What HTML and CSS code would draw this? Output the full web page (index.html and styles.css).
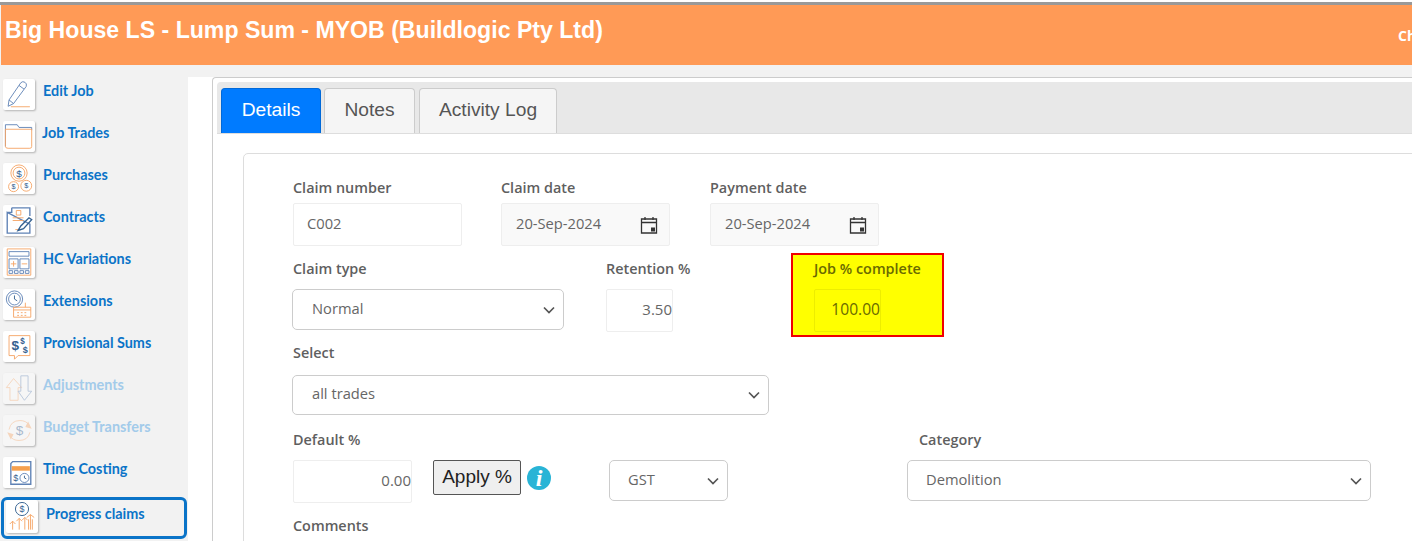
FILE: index.html

```html
<!DOCTYPE html>
<html lang="en">

<head>
  <meta charset="UTF-8">
  <title>Progress claims</title>
  <link rel="stylesheet" href="styles.css">
</head>

<body>

  <div class="top-line"></div>
  <header class="header">
    <h1 class="job-title">Big House LS - Lump Sum - MYOB (Buildlogic Pty Ltd)</h1>
    <span class="header-link">Change job</span>
  </header>

  <div class="layout">
    <nav class="sidebar">
      <a class="nav-item">
        <span class="nav-icon">
          <svg viewBox="0 0 32 32"><path class="b" d="M5 22 L18 3 Q20 1 22.500 2.500 Q25 4 24 7 L10 26 L4 29 Z M16 6 L21.500 10 M5 22 L10 26"/><path class="o" d="M7 29.500 H28"/></svg>
        </span>
        Edit Job
      </a>
      <a class="nav-item">
        <span class="nav-icon">
          <svg viewBox="0 0 32 32"><path class="b" d="M1 27 V3 H14 L16 6 H30 V9"/><path class="o" d="M1 8 H30 V27 Q30 29 28 29 H4 Q1 29 1 27 Z"/></svg>
        </span>
        <span class="nudge">Job Trades</span>
      </a>
      <a class="nav-item">
        <span class="nav-icon">
          <svg viewBox="0 0 32 32"><circle class="o" cx="16" cy="10" r="9"/><circle class="o" cx="16" cy="10" r="6.500"/><circle class="o" cx="10" cy="25" r="5.500"/><circle class="o" cx="24" cy="24" r="6"/><text class="d" x="16" y="14" font-size="11">$</text><text class="d" x="10" y="28" font-size="8">$</text><text class="d" x="24" y="27" font-size="8">$</text></svg>
        </span>
        Purchases
      </a>
      <a class="nav-item">
        <span class="nav-icon">
          <svg viewBox="0 0 32 32"><path class="b thick" d="M8 2 H28 V11 M28 20 V30 H3 V7 Z M8 2 V7 H3"/><path class="o" d="M13 5 H18 V10 H13 Z M9 13 H21 M9 16 H21 M12 26 H18"/><path class="n thick" d="M15 27 L18 22 L27 13 L30 15 L21 25 Z"/></svg>
        </span>
        Contracts
      </a>
      <a class="nav-item">
        <span class="nav-icon">
          <svg viewBox="0 0 32 32"><path class="o" d="M3 1 H29 V30 H3 Z"/><path class="b" d="M5 4 H27 V9 H5 Z M5 12 H15 V23 H5 Z M17 12 H27 V23 H17 Z M5 25 H9 V28 H5 Z M11 25 H15 V28 H11 Z M17 25 H21 V28 H17 Z M23 25 H27 V28 H23 Z"/><path class="o" d="M7 17.500 H13 M10 14.500 V20.500 M19 17.500 H25"/></svg>
        </span>
        HC Variations
      </a>
      <a class="nav-item">
        <span class="nav-icon">
          <svg viewBox="0 0 32 32"><circle class="b" cx="11" cy="10" r="9"/><circle class="b" cx="11" cy="10" r="6.500"/><path class="n" d="M11 6 V10 L14 12"/><path class="o" d="M10 19 H29 V30 H10 Z M10 22 H29 M23 14 V19 M14 25 H16 M18 25 H20 M22 25 H24 M14 28 H16 M18 28 H20 M22 28 H24"/></svg>
        </span>
        Extensions
      </a>
      <a class="nav-item">
        <span class="nav-icon">
          <svg viewBox="0 0 32 32"><path class="o" d="M5 4 H28 V26 H15 L11 30 V26 H5 Z"/><text class="d heavy" x="12" y="20" font-size="15">$</text><text class="d heavy" x="20" y="13" font-size="9">$</text><text class="d heavy" x="23" y="23" font-size="10">$</text></svg>
        </span>
        Provisional Sums
      </a>
      <a class="nav-item is-disabled">
        <span class="nav-icon">
          <svg viewBox="0 0 32 32"><path class="o" d="M10 5 L19 15 H15 V29 H6 V15 H2 Z"/><path class="b" d="M18 2 H26 V19 H30 L22 29 L15 19 H18 Z"/></svg>
        </span>
        Adjustments
      </a>
      <a class="nav-item is-disabled">
        <span class="nav-icon">
          <svg viewBox="0 0 32 32"><path class="o" d="M5 15 Q7 5 17 5 Q24 5 27 10 M28 18 Q26 27 16 27 Q9 27 6 22"/><path class="fill-o" d="M26 6 L30 14 L23 12 Z M7 26 L3 18 L10 20 Z"/><text class="d" x="16.500" y="21" font-size="15">$</text></svg>
        </span>
        Budget Transfers
      </a>
      <a class="nav-item">
        <span class="nav-icon">
          <svg viewBox="0 0 32 32"><path class="b thick" d="M9 4 H29 V29 H7 V6 Z"/><path class="bar" d="M8 9 H28 V14 H8 Z"/><circle class="b" cx="22" cy="22" r="5"/><text class="d" x="12.500" y="25.500" font-size="10">$</text><path class="n" d="M22 19.500 V22 L24 23"/></svg>
        </span>
        Time Costing
      </a>
      <a class="nav-item is-active">
        <span class="nav-icon">
          <svg viewBox="0 0 32 32"><circle class="n" cx="16" cy="8" r="7"/><text class="d" x="16" y="11.500" font-size="9.500">$</text><path class="o" d="M3 24 L6 21 L9 24 M6 21 V30 M10 21 L13 18 L16 21 M13 18 V30 M16 20 L19 17 L22 20 M19 17 V30 M21 17 L25 14 L29 17 M25 14 V30 M23 19 V30 M27 19 V30"/></svg>
        </span>
        Progress claims
      </a>
    </nav>

    <main class="main">
      <div class="panel">
        <div class="tab-bar">
          <button type="button" class="tab tab-details is-current">Details</button>
          <button type="button" class="tab tab-notes">Notes</button>
          <button type="button" class="tab tab-log">Activity Log</button>
        </div>

        <form class="claim-card">
          <div class="row row-first">
            <div class="field w-169">
              <label>Claim number</label>
              <input type="text" class="text-input" value="C002">
            </div>
            <div class="field w-169">
              <label>Claim date</label>
              <div class="date-input">
                20-Sep-2024
                <svg class="cal-icon" viewBox="0 0 18 18"><path d="M1.500 3 H16.500 V17 H1.500 Z M1.500 6.500 H16.500 M5 1 V4 M13 1 V4" fill="none" stroke="#333" stroke-width="1.300"/><rect x="11" y="11.500" width="4" height="4" fill="#333"/></svg>
              </div>
            </div>
            <div class="field w-169 payment">
              <label>Payment date</label>
              <div class="date-input">
                20-Sep-2024
                <svg class="cal-icon" viewBox="0 0 18 18"><path d="M1.500 3 H16.500 V17 H1.500 Z M1.500 6.500 H16.500 M5 1 V4 M13 1 V4" fill="none" stroke="#333" stroke-width="1.300"/><rect x="11" y="11.500" width="4" height="4" fill="#333"/></svg>
              </div>
            </div>
          </div>

          <div class="row row-second">
            <div class="field claim-type">
              <label>Claim type</label>
              <select class="select-input"><option>Normal</option></select>
            </div>
            <div class="field retention">
              <label>Retention %</label>
              <input type="text" class="text-input num" value="3.50">
            </div>
            <div class="field job-complete">
              <label>Job % complete</label>
              <input type="text" class="text-input num" value="100.00">
            </div>
          </div>

          <div class="row row-third">
            <div class="field select-all">
              <label>Select</label>
              <select class="select-input"><option>all trades</option></select>
            </div>
          </div>

          <div class="row row-fourth">
            <div class="field default-pct">
              <label>Default %</label>
              <input type="text" class="text-input num" value="0.00">
            </div>
            <button type="button" class="apply-btn">Apply %</button>
            <span class="info-icon">i</span>
            <select class="select-input gst"><option>GST</option></select>
            <div class="field category">
              <label>Category</label>
              <select class="select-input"><option>Demolition</option></select>
            </div>
          </div>

          <div class="comments">
            <label>Comments</label>
          </div>
        </form>
      </div>
    </main>
  </div>

</body>

</html>
```

FILE: styles.css

```css
* {
  box-sizing: border-box;
}

html,
body {
  height: 541px;
  overflow: hidden;
}

body {
  margin: 0;
  background: #f2f2f2;
  font-family: "Open Sans", sans-serif;
}

.top-line {
  height: 5px;
  background: #999;
  border-top: 2px solid #fff;
}

.header {
  display: flex;
  height: 60px;
  margin-left: 1px;
  background: #ff9a56;
  color: #fff;
  overflow: hidden;
}

.job-title {
  flex: none;
  width: 1397px;
  margin: 0;
  padding: 10px 0 0 4px;
  font-family: "Liberation Sans", sans-serif;
  font-size: 23.100px;
  line-height: 30px;
  font-weight: bold;
}

.header-link {
  flex: none;
  padding-top: 21px;
  font-size: 14px;
  font-weight: bold;
  white-space: nowrap;
}

.layout {
  display: flex;
}

/* sidebar */
.sidebar {
  flex: none;
  width: 188px;
  padding: 14px 0 0 3px;
}

.nav-item {
  display: flex;
  align-items: flex-start;
  height: 42px;
  font-family: Lato, sans-serif;
  font-size: 14.400px;
  line-height: 24px;
  font-weight: bold;
  color: #0b74c8;
}

.nav-icon {
  flex: none;
  width: 32px;
  height: 31px;
  margin-right: 8px;
  padding: 1px;
  background: #fff;
  border-radius: 2px;
  box-shadow: 1px 1px 2px rgba(0, 0, 0, 0.25);
}

.nav-icon svg {
  display: block;
  width: 100%;
  height: 100%;
  fill: none;
  stroke-width: 1;
}

.nav-icon .b { stroke: #5f82b5; }
.nav-icon .o { stroke: #f5a566; }
.nav-icon .n { stroke: #33608f; }
.nav-icon .thick { stroke-width: 1.500; }
.nav-icon .bar { fill: #f5a04f; }
.nav-icon .fill-o { fill: #f5a566; }

.nav-icon .d {
  fill: #33608f;
  font-family: "Liberation Sans", sans-serif;
  font-weight: normal;
  text-anchor: middle;
}

.nav-icon .heavy {
  font-weight: bold;
}

.nudge {
  margin-left: -1px;
}

.is-disabled {
  color: #a3cbea;
}

.is-disabled .nav-icon {
  background: #f6f6f6;
}

.is-disabled svg {
  opacity: 0.4;
}

.is-active {
  width: 186px;
  height: 42px;
  margin: -2px 0 0 -2px;
  padding-left: 2px;
  border: 3px solid #0b74c8;
  border-radius: 6px;
  line-height: 28px;
}

.is-active .nav-icon {
  height: 33px;
}

/* main area */
.main {
  flex: 1;
  min-width: 0;
  height: 464px;
  margin-top: 12px;
  padding-left: 24px;
  background: #fff;
}

.panel {
  height: 100%;
  padding: 4px 0 0 4px;
  border-top: 1px solid #ccc;
  border-left: 1px solid #ccc;
  border-top-left-radius: 4px;
}

.tab-bar {
  display: flex;
  height: 52px;
  padding: 6px 0 0 4px;
  background: #e8e8e8;
  border-bottom: 1px solid #ddd;
  border-top-left-radius: 4px;
}

.tab {
  height: 45px;
  padding: 0 0 2px;
  background: #f5f5f5;
  border: 1px solid #ccc;
  border-bottom: none;
  border-radius: 4px 4px 0 0;
  color: #555;
  font-family: "Liberation Sans", sans-serif;
  font-size: 19.200px;
}

.tab-details {
  width: 100px;
}

.tab-notes {
  width: 91px;
  margin-left: 3px;
}

.tab-log {
  width: 138px;
  margin-left: 4px;
}

.is-current {
  background: #007bff;
  border-color: #0069d9;
  color: #fff;
}

.claim-card {
  width: 1300px;
  height: 500px;
  margin: 19px 0 0 26px;
  padding: 25px 0 0 49px;
  border: 1px solid #ddd;
  border-radius: 5px;
}

.row {
  display: flex;
}

.row-first {
  gap: 39px;
}

.payment {
  margin-left: 1px;
}

.field label,
.comments label {
  display: block;
  height: 18px;
  margin-bottom: 6px;
  font-size: 14.400px;
  line-height: 18px;
  font-weight: 600;
  color: #5f5f5f;
  white-space: nowrap;
}

.w-169 {
  width: 169px;
}

.text-input,
.date-input,
.select-input {
  font-family: "Open Sans", sans-serif;
  font-size: 14.700px;
  color: #666;
}

.text-input {
  display: block;
  width: 100%;
  height: 43px;
  padding: 0 13px 4px;
  border: 1px solid #eee;
  border-radius: 2px;
  background: transparent;
  outline: none;
}

.text-input.num {
  padding: 0 0 4px 2px;
  font-size: 15px;
  text-align: right;
}

.date-input {
  display: flex;
  align-items: center;
  justify-content: space-between;
  height: 43px;
  padding: 0 11px 4px 14px;
  background: #f9f9f9;
  border: 1px solid #eee;
  border-radius: 2px;
}

.cal-icon {
  width: 18px;
  height: 18px;
  margin-top: 4px;
}

.select-input {
  display: block;
  width: 100%;
  height: 41px;
  padding: 0 30px 4px 19px;
  appearance: none;
  background: #fff url("data:image/svg+xml,%3Csvg xmlns='http://www.w3.org/2000/svg' width='12' height='8'%3E%3Cpath d='M1 1.500 L6 6.500 L11 1.500' fill='none' stroke='%23555' stroke-width='1.700'/%3E%3C/svg%3E") no-repeat right 8px center;
  border: 1px solid #ccc;
  border-radius: 5px;
}

.row-second {
  height: 84px;
  margin-top: 7px;
}

.row-second .field {
  padding-top: 7px;
}

.row-second label {
  margin-bottom: 11px;
}

.claim-type {
  width: 272px;
  margin-left: -1px;
}

.claim-type label,
.select-all label {
  padding-left: 1px;
}

.retention {
  width: 67px;
  margin-left: 42px;
}

.row-second .job-complete {
  width: 153px;
  margin-left: 118px;
  padding: 5px 0 0 21px;
  background: #ff0;
  border: 2px solid #f00000;
}

.job-complete label {
  color: #6a6a00;
}

.job-complete .text-input.num {
  width: 67px;
  border-color: #eded00;
  color: #6a6a00;
  font-size: 15.600px;
}

.row-third {
  margin-top: 7px;
}

.row-third label {
  margin-bottom: 13px;
}

.select-all {
  width: 477px;
  margin-left: -1px;
}

.select-all .select-input {
  height: 40px;
}

.row-fourth {
  align-items: flex-start;
  margin-top: 16px;
}

.row-fourth label {
  margin-bottom: 11px;
}

.default-pct {
  width: 119px;
}

.apply-btn {
  flex: none;
  width: 88px;
  height: 35px;
  margin: 29px 0 0 21px;
  padding: 0 0 2px;
  background: #efefef;
  border: 1px solid #555;
  border-radius: 2px;
  color: #222;
  font-family: "Liberation Sans", sans-serif;
  font-size: 19px;
}

.info-icon {
  flex: none;
  width: 24px;
  height: 24px;
  margin: 35px 0 0 6px;
  background: #29b4d6;
  border-radius: 50%;
  color: #fff;
  font-family: "Liberation Serif", serif;
  font-size: 24px;
  font-style: italic;
  font-weight: bold;
  line-height: 24px;
  text-align: center;
}

.gst {
  flex: none;
  width: 119px;
  margin: 29px 0 0 58px;
  padding-left: 18px;
}

.category {
  width: 464px;
  margin-left: 179px;
}

.category label {
  padding-left: 12px;
}

.category .select-input {
  padding-left: 18px;
}

.comments {
  margin-top: 14px;
}
```
